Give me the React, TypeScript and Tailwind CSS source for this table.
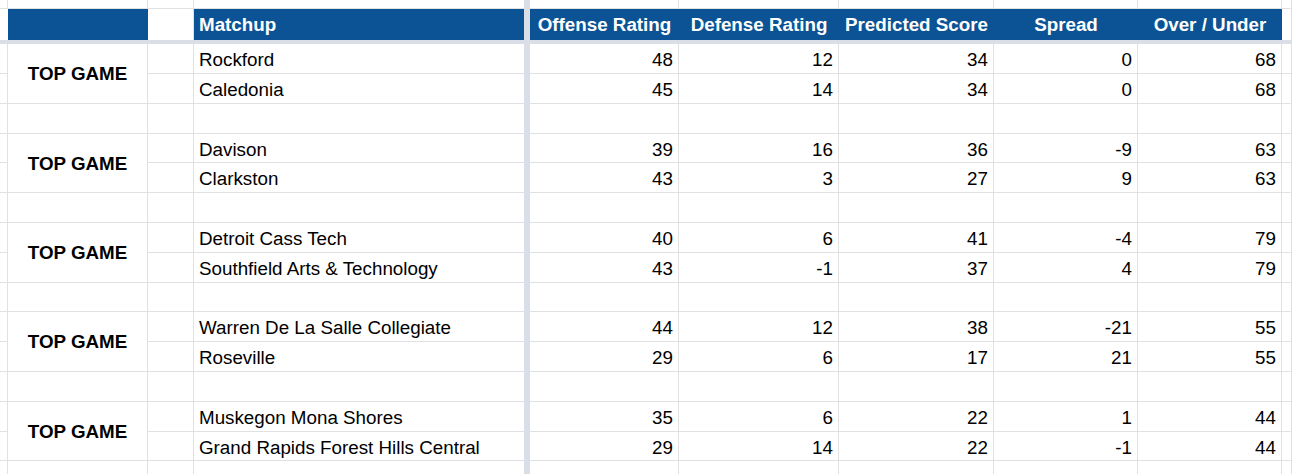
import React from "react";

type Team = { name: string; off: number; def: number; score: number; spread: number; ou: number };

const games: Team[][] = [
  [
    { name: "Rockford", off: 48, def: 12, score: 34, spread: 0, ou: 68 },
    { name: "Caledonia", off: 45, def: 14, score: 34, spread: 0, ou: 68 },
  ],
  [
    { name: "Davison", off: 39, def: 16, score: 36, spread: -9, ou: 63 },
    { name: "Clarkston", off: 43, def: 3, score: 27, spread: 9, ou: 63 },
  ],
  [
    { name: "Detroit Cass Tech", off: 40, def: 6, score: 41, spread: -4, ou: 79 },
    { name: "Southfield Arts & Technology", off: 43, def: -1, score: 37, spread: 4, ou: 79 },
  ],
  [
    { name: "Warren De La Salle Collegiate", off: 44, def: 12, score: 38, spread: -21, ou: 55 },
    { name: "Roseville", off: 29, def: 6, score: 17, spread: 21, ou: 55 },
  ],
  [
    { name: "Muskegon Mona Shores", off: 35, def: 6, score: 22, spread: 1, ou: 44 },
    { name: "Grand Rapids Forest Hills Central", off: 29, def: 14, score: 22, spread: -1, ou: 44 },
  ],
];

const line = "border-r border-b border-[#e0e1e2]";
const freeze = "bg-[#dadfe7]";
const num = `${line} flex items-center justify-end pr-[5px] pt-[4px]`;

function Blank({ k }: { k: string }) {
  // an empty spreadsheet row
  return (
    <React.Fragment key={k}>
      <div className={line} />
      <div className={line} />
      <div className={line} />
      <div className="border-b border-[#e0e1e2]" />
      <div className={freeze} />
      <div className={line} />
      <div className={line} />
      <div className={line} />
      <div className={line} />
      <div className={line} />
      <div className={line} />
    </React.Fragment>
  );
}

function TeamCells({ t }: { t: Team }) {
  return (
    <>
      <div className="border-b border-[#e0e1e2] flex items-center pl-[5px] pt-[4px] whitespace-nowrap">{t.name}</div>
      <div className={freeze} />
      <div className={num}>{t.off}</div>
      <div className={num}>{t.def}</div>
      <div className={num}>{t.score}</div>
      <div className={num}>{t.spread}</div>
      <div className={num}>{t.ou}</div>
      <div className={line} />
    </>
  );
}

export default function App() {
  const headers = ["Offense Rating", "Defense Rating", "Predicted Score", "Spread", "Over / Under"];

  return (
    <div
      className="h-[474px] w-[1292px] overflow-hidden bg-white text-black text-[18.8px]"
      style={{ fontFamily: '"Liberation Sans", Arial, sans-serif' }}
    >
      <div className="grid grid-cols-[8px_140px_46px_330px_6px_149px_160px_155px_144px_144px_1fr] grid-rows-[9px_31px_4px_30px_30px_30px_29px_30px_30px_30px_30px_29px_30px_30px_30px_30px_29px_30px]">
        {/* partial row above the header */}
        <div className={line} />
        <div className={line} />
        <div className={line} />
        <div className="border-b border-[#e0e1e2]" />
        <div className={freeze} />
        <div className={line} />
        <div className={line} />
        <div className={line} />
        <div className={line} />
        <div className={line} />
        <div className={line} />

        {/* header */}
        <div />
        <div className="bg-[#0b5394]" />
        <div className="border-r border-[#e0e1e2]" />
        <div className="bg-[#0b5394] text-white font-bold flex items-center pl-[5px] pt-[1px]">Matchup</div>
        <div className={freeze} />
        {headers.map((h) => (
          <div key={h} className="bg-[#0b5394] text-white font-bold flex items-center justify-center pt-[1px] whitespace-nowrap">
            {h}
          </div>
        ))}
        <div className="border-r border-[#e0e1e2]" />

        {/* frozen row divider */}
        <div className={`col-span-full ${freeze}`} />

        {games.map((g, i) => (
          <React.Fragment key={i}>
            <div className={line} />
            <div className={`${line} row-span-2 flex items-center justify-center font-bold pt-[2px]`}>TOP GAME</div>
            <div className={line} />
            <TeamCells t={g[0]} />
            <div className={line} />
            <div className={line} />
            <TeamCells t={g[1]} />
            <Blank k={`b${i}`} />
          </React.Fragment>
        ))}
      </div>
    </div>
  );
}
